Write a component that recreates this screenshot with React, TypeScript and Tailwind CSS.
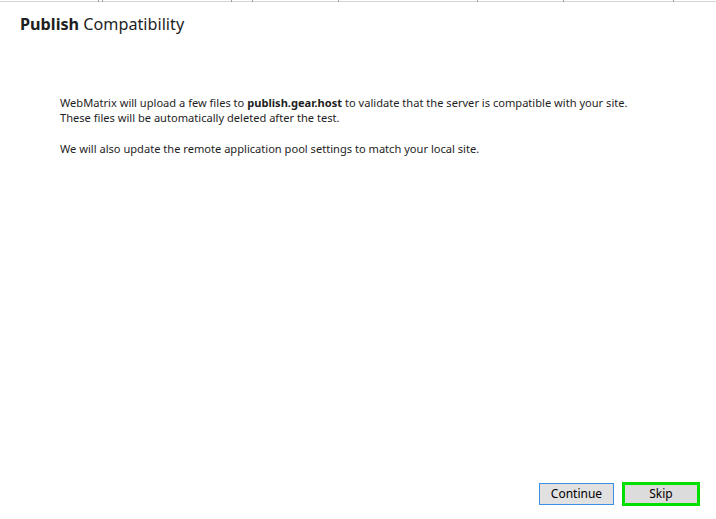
const TICKS = [98, 102, 231, 252, 338, 477, 563, 673]

export default function App() {
  return (
    <div className="relative flex h-[519px] w-[716px] flex-col bg-white font-['Noto_Sans',sans-serif] text-[#1e1e1e]">
      {/* top rule with the little column ticks from the window behind */}
      <div className="relative h-[3px] w-full">
        <div className="absolute left-0 right-0 top-[1px] h-[1px] bg-[#d4d4d4]" />
        {TICKS.map((x) => (
          <div
            key={x}
            className="absolute top-0 h-[2px] w-[1px] bg-[#a0a0a0]"
            style={{ left: x }}
          />
        ))}
      </div>

      <h1 className="ml-[20px] mt-[10px] text-[16.2px] leading-[22px]">
        <span className="font-bold">Publish</span> Compatibility
      </h1>

      <div className="ml-[60px] mt-[60px] text-[11.1px] leading-[15px]">
        <p>
          WebMatrix will upload a few files to{' '}
          <span className="font-bold">publish.gear.host</span> to validate that the
          server is compatible with your site.
        </p>
        <p>These files will be automatically deleted after the test.</p>
        <p className="mt-[16px]">
          We will also update the remote application pool settings to match your
          local site.
        </p>
      </div>

      <div className="mt-auto mb-[13px] mr-[16px] flex items-end justify-end gap-[8px]">
        <button
          type="button"
          className="mb-[1px] h-[22px] w-[75px] border border-[#3c8fe6] bg-[#e1e1e1] text-[12px] leading-none text-black"
        >
          Continue
        </button>
        <button
          type="button"
          className="h-[24px] w-[78px] border-[3px] border-[#00e000] bg-[#dcdcdc] text-[12px] leading-none text-black"
        >
          Skip
        </button>
      </div>
    </div>
  )
}
